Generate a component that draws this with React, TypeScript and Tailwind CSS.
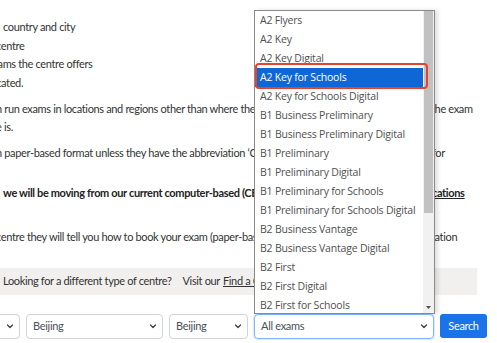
import type { ReactNode } from "react";

const exams = [
  "A2 Flyers",
  "A2 Key",
  "A2 Key Digital",
  "A2 Key for Schools",
  "A2 Key for Schools Digital",
  "B1 Business Preliminary",
  "B1 Business Preliminary Digital",
  "B1 Preliminary",
  "B1 Preliminary Digital",
  "B1 Preliminary for Schools",
  "B1 Preliminary for Schools Digital",
  "B2 Business Vantage",
  "B2 Business Vantage Digital",
  "B2 First",
  "B2 First Digital",
  "B2 First for Schools",
];

const pageFont = { fontFamily: "Lato, 'Open Sans', sans-serif" };

// One line of the page text: the left part is cut by the open list,
// the tail shows again to the right of it.
function Line({
  children,
  tail,
  shift = "",
  className = "h-[18px]",
}: {
  children: ReactNode;
  tail?: ReactNode;
  shift?: string;
  className?: string;
}) {
  return (
    <div className={`flex items-center whitespace-nowrap ${className}`}>
      <div className="w-[432px] shrink-0 overflow-hidden">
        <span className={`block ${shift}`}>{children}</span>
      </div>
      {tail ? <span>{tail}</span> : null}
    </div>
  );
}

function Chevron() {
  return (
    <svg width="8" height="8" viewBox="0 0 16 16" className="shrink-0">
      <path
        d="M3 6l5 5 5-5"
        fill="none"
        stroke="#343a40"
        strokeWidth="2.4"
        strokeLinecap="round"
        strokeLinejoin="round"
      />
    </svg>
  );
}

function Select({
  label,
  className = "",
}: {
  label: string;
  className?: string;
}) {
  return (
    <div
      className={`flex h-[25px] items-center justify-between rounded-[4px] border bg-white pl-[6px] pr-[5px] text-[11px] tracking-[-0.3px] text-[#495057] ${className}`}
    >
      <span>{label}</span>
      <Chevron />
    </div>
  );
}

export default function App() {
  return (
    <div
      className="relative h-[343px] w-[497px] overflow-hidden bg-white text-[11px] tracking-[-0.35px] text-[#333333]"
      style={pageFont}
    >
      <div className="pt-[18px]">
        <div>
          <Line className="h-[18.7px]" shift="pl-[3px]">
            country and city
          </Line>
          <Line className="h-[18.7px]" shift="-ml-[4px]">
            centre
          </Line>
          <Line className="h-[18.7px]" shift="-ml-[13px]">
            exams the centre offers
          </Line>
          <Line className="h-[18.7px]" shift="-ml-[12px]">
            located.
          </Line>
        </div>
        <div className="mt-[7px]">
          <Line
            shift="-ml-[4px]"
            tail={<span className="-ml-[1px]">the exam</span>}
          >
            n run exams in locations and regions other than where the centre is based, so check where you can take
          </Line>
          <Line shift="-ml-[4px]">e is.</Line>
        </div>
        <Line
          className="mt-[8px] h-[18px]"
          shift="-ml-[4px]"
          tail={<span>for</span>}
        >
          n paper-based format unless they have the abbreviation ‘CB’ next to their name
        </Line>
        <Line
          className="mt-[22px] h-[18px] font-bold text-[#222222]"
          shift="pl-[3px]"
          tail={<span className="underline">cations</span>}
        >
          we will be moving from our current computer-based (CB) exams to digital Cambridge English Qualifi
        </Line>
        <Line
          className="mt-[26px] h-[18px]"
          shift="-ml-[4px]"
          tail={<span className="-ml-[1px]">ration</span>}
        >
          centre they will tell you how to book your exam (paper-based or computer-based) and about regist
        </Line>

        <div className="mt-[22px] flex h-[27px] w-[477px] items-center whitespace-nowrap bg-[#f1f0ef] pl-[3px]">
          <span>Looking for a different type of centre?</span>
          <span className="ml-[11px]">Visit our</span>
          <span className="ml-[3px] underline">Find a Centre page</span>
        </div>

        <div className="mt-[19px] flex items-center gap-[6px]">
          <Select label="China" className="-ml-[60px] w-[80px] border-[#ced4da]" />
          <Select label="Beijing" className="w-[137px] border-[#ced4da]" />
          <Select label="Beijing" className="w-[79px] border-[#ced4da]" />
          <Select
            label="All exams"
            className="w-[180px] border-[#86b7fe] shadow-[0_0_0_1px_rgba(13,110,253,0.15)]"
          />
          <button
            type="button"
            className="h-[24px] w-[47px] rounded-[3px] bg-[#1a73e8] text-[11px] text-white"
          >
            Search
          </button>
        </div>
      </div>

      {/* open native list of the exam select */}
      <div
        className="absolute left-[254px] top-[10px] flex h-[304px] w-[181px] border border-[#8a8a8a] bg-white shadow-[3px_0_4px_rgba(0,0,0,0.12)]"
        style={{ fontFamily: "'Open Sans', 'Noto Sans', sans-serif" }}
      >
        <ul className="flex-1 overflow-hidden">
          {exams.map((exam, index) => (
            <li
              key={exam}
              className={`flex h-[19px] items-center whitespace-nowrap pl-[5px] text-[10.5px] tracking-[-0.2px] ${
                index === 3
                  ? "bg-[#0f66d6] text-white"
                  : "text-[#505050]"
              }`}
            >
              {exam}
            </li>
          ))}
        </ul>
        <div className="flex w-[11px] flex-col bg-[#f1f1f1]">
          <div className="mx-[1px] h-[202px] bg-[#c1c1c1]" />
          <div className="flex-1" />
          <div className="flex h-[12px] items-center justify-center">
            <svg width="5" height="3" viewBox="0 0 5 3">
              <path d="M0 0h5L2.5 3z" fill="#505050" />
            </svg>
          </div>
        </div>
      </div>

      {/* highlight ring drawn round the selected option */}
      <div className="pointer-events-none absolute left-[255px] top-[63px] h-[26px] w-[173px] rounded-[4px] border-2 border-[#e5432d]" />
    </div>
  );
}
